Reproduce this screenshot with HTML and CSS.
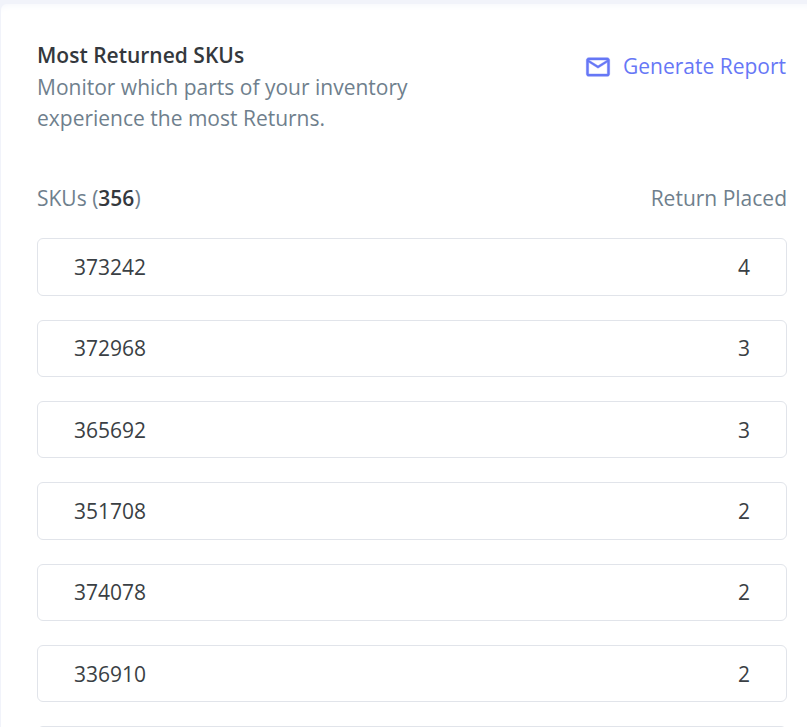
FILE: index.html
```html
<!DOCTYPE html>
<html lang="en">
<head>
<meta charset="utf-8">
<title>Most Returned SKUs</title>
<link rel="stylesheet" href="styles.css">
</head>
<body>
<main class="card">
  <header class="head">
    <div class="intro">
      <h2 class="title">Most Returned SKUs</h2>
      <p class="desc">Monitor which parts of your inventory experience the most Returns.</p>
    </div>
    <a class="report" href="#">
      <svg class="mail" width="28" height="28" viewBox="0 0 24 24" fill="currentColor" stroke="currentColor" stroke-width="0.35"><path d="M20 4H4c-1.1 0-2 .9-2 2v12c0 1.1.9 2 2 2h16c1.1 0 2-.9 2-2V6c0-1.1-.9-2-2-2zm0 14H4V8l8 5 8-5v10zm-8-7L4 6h16l-8 5z"/></svg>
      <span>Generate Report</span>
    </a>
  </header>
  <div class="cols">
    <span>SKUs (<b class="count">356</b>)</span>
    <span>Return Placed</span>
  </div>
  <ul class="rows">
    <li class="row"><span>373242</span><span class="num">4</span></li>
    <li class="row"><span>372968</span><span class="num">3</span></li>
    <li class="row"><span>365692</span><span class="num">3</span></li>
    <li class="row"><span>351708</span><span class="num">2</span></li>
    <li class="row"><span>374078</span><span class="num">2</span></li>
    <li class="row"><span>336910</span><span class="num">2</span></li>
    <li class="row"></li>
  </ul>
</main>
</body>
</html>
```
FILE: styles.css
```css
html, body { height: 100%; }
body {
  margin: 0;
  height: 727px;
  overflow: hidden;
  background: #f1f3fa;
  font-family: "Open Sans", "Noto Sans", sans-serif;
  font-size: 21px;
  color: #3a3f44;
}
.card {
  margin: 4px 0 0 1px;
  padding: 36px 20px 0 36px;
  background: #fff;
  border-radius: 6px 0 0 0;
  height: 723px;
  box-sizing: border-box;
  box-shadow: inset 0 8px 8px -8px #f1f3fa;
}
.head { display: flex; justify-content: space-between; align-items: flex-start; }
.intro { width: 400px; }
.title { margin: 0; font-size: 21px; font-weight: 600; line-height: 30px; color: #34383d; }
.desc { margin: 2px 0 0; line-height: 31px; color: #6f7f8d; }
.report {
  display: flex;
  align-items: center;
  gap: 11px;
  margin: 11px 1px 0 0;
  line-height: 30px;
  color: #6677f6;
  text-decoration: none;
}
.mail { position: relative; top: 1px; }
.cols {
  display: flex;
  justify-content: space-between;
  margin-top: 49px;
  line-height: 30px;
  color: #6f7f8d;
}
.count { font-weight: 600; color: #34383d; }
.rows {
  list-style: none;
  margin: 25.35px 0 0;
  padding: 0;
  display: flex;
  flex-direction: column;
  gap: 24px;
}
.row {
  display: flex;
  justify-content: space-between;
  align-items: center;
  box-sizing: border-box;
  height: 57.35px;
  padding: 0 36px;
  background: #fff;
  border: 1px solid #e1e4ea;
  border-radius: 6px;
}
```
